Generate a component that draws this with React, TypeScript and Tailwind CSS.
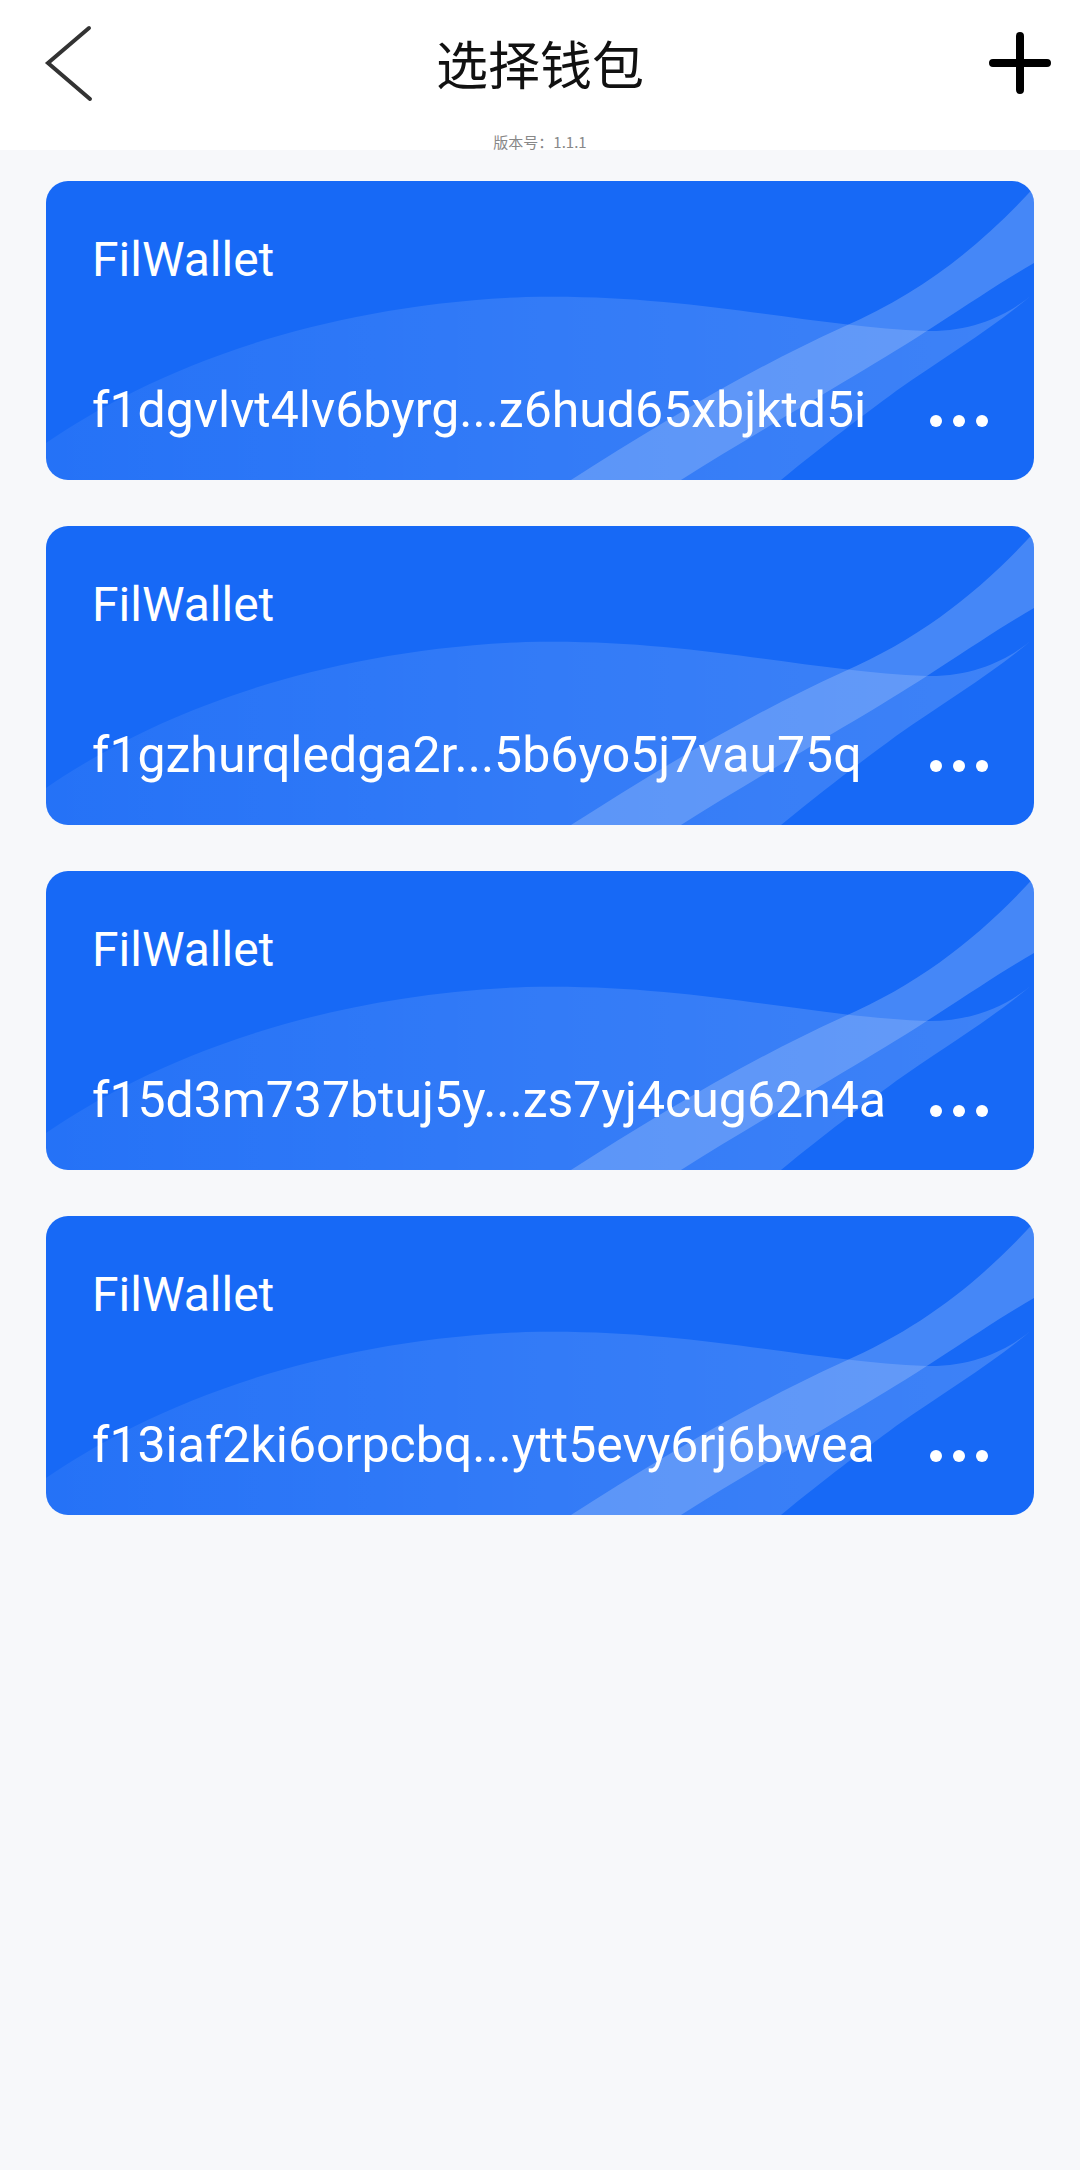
import React, { useId } from 'react'

const wallets = [
  { name: 'FilWallet', address: 'f1dgvlvt4lv6byrg...z6hud65xbjktd5i' },
  { name: 'FilWallet', address: 'f1gzhurqledga2r...5b6yo5j7vau75q' },
  { name: 'FilWallet', address: 'f15d3m737btuj5y...zs7yj4cug62n4a' },
  { name: 'FilWallet', address: 'f13iaf2ki6orpcbq...ytt5evy6rj6bwea' },
]

function Waves() {
  const id = useId()
  return (
    <svg className="absolute inset-0 h-full w-full" viewBox="0 0 988 299" preserveAspectRatio="none">
      <defs>
        <linearGradient id={id} x1="0" y1="0" x2="1" y2="0">
          <stop offset="0" stopColor="#ffffff" stopOpacity="0.06" />
          <stop offset="0.5" stopColor="#ffffff" stopOpacity="0.12" />
          <stop offset="1" stopColor="#ffffff" stopOpacity="0.17" />
        </linearGradient>
      </defs>
      {/* broad wave */}
      <path
        d="M0 262 C90 200 250 125 480 116 C640 112 760 145 880 150 C930 151 965 132 988 112 C950 145 900 175 850 210 C815 236 780 262 735 299 L0 299 Z"
        fill={`url(#${id})`}
      />
      {/* diagonal band */}
      <path
        d="M994 0 C940 60 880 110 797 146 C700 190 610 245 525 299 L635 299 C720 245 820 190 887 146 C930 118 960 98 988 82 L988 0 Z"
        fill="#ffffff"
        fillOpacity="0.2"
      />
    </svg>
  )
}

function WalletCard({ name, address }: { name: string; address: string }) {
  return (
    <div className="relative h-[299px] overflow-hidden rounded-[22px] bg-[#1769f6]">
      <Waves />
      <div className="relative flex h-full flex-col px-[46px] font-['Roboto',sans-serif] text-white">
        <div className="mt-[54px] text-[48px] leading-[50px]">{name}</div>
        <div className="mt-[100px] flex items-end justify-between">
          <div className="whitespace-nowrap text-[50px] leading-[50px]">{address}</div>
          <div className="mb-[8px] flex gap-[11px]">
            <span className="h-[12px] w-[12px] rounded-full bg-white" />
            <span className="h-[12px] w-[12px] rounded-full bg-white" />
            <span className="h-[12px] w-[12px] rounded-full bg-white" />
          </div>
        </div>
      </div>
    </div>
  )
}

export default function App() {
  return (
    <div className="min-h-screen bg-[#f7f8fa]">
      {/* 顶部导航 */}
      <header className="flex h-[150px] flex-col bg-white">
        <div className="grid h-[126px] grid-cols-[1fr_auto_1fr] items-center">
          <div className="pl-[44px]">
            <svg width="50" height="80" viewBox="0 0 50 80" fill="none">
              <path d="M45 5 L4 40 L46 76" stroke="#333333" strokeWidth="4" strokeLinecap="round" />
            </svg>
          </div>
          <h1 className="font-['Noto_Sans_CJK_SC',sans-serif] text-[52px] font-normal leading-[52px] text-[#111111]">
            选择钱包
          </h1>
          <div className="flex justify-end pr-[28px]">
            <svg width="64" height="64" viewBox="0 0 64 64" fill="none">
              <path d="M32 5 V59 M5 32 H59" stroke="#000000" strokeWidth="8" strokeLinecap="round" />
            </svg>
          </div>
        </div>
        <div className="mt-[8px] text-center font-['Noto_Sans_CJK_SC',sans-serif] text-[15px] leading-[16px] text-[#888888]">
          版本号：1.1.1
        </div>
      </header>

      {/* 钱包列表 */}
      <main className="flex flex-col gap-[46px] px-[46px] pt-[31px]">
        {wallets.map((w, i) => (
          <WalletCard key={i} name={w.name} address={w.address} />
        ))}
      </main>
    </div>
  )
}
